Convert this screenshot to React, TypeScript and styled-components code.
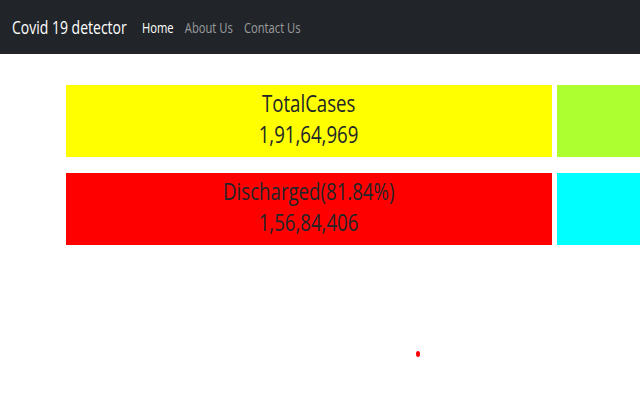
import React from 'react';
import styled, { createGlobalStyle } from 'styled-components';

const GlobalStyle = createGlobalStyle`
  html, body {
    margin: 0;
    padding: 0;
    background: #fff;
    overflow: hidden;
    width: 640px;
    height: 420px;
  }
  body {
    font-family: 'Open Sans', 'Noto Sans', sans-serif;
    color: #212529;
  }
`;

const stats = [
  { title: 'TotalCases', value: '1,91,64,969', color: '#ffff00' },
  { title: '', value: '', color: '#adff2f' },
  { title: 'Discharged(81.84%)', value: '1,56,84,406', color: '#ff0000' },
  { title: '', value: '', color: '#00ffff' },
];

function App() {
  return (
    <Page>
      <GlobalStyle />
      <NavBar>
        <NavContent>
          <Brand>Covid 19 detector</Brand>
          <NavLinks>
            <NavLink active>Home</NavLink>
            <NavLink>About Us</NavLink>
            <NavLink>Contact Us</NavLink>
          </NavLinks>
        </NavContent>
      </NavBar>
      <CardGrid>
        {stats.map((s, i) => (
          <Card key={i} bg={s.color}>
            <CardText>{s.title}</CardText>
            <CardText>{s.value}</CardText>
          </Card>
        ))}
      </CardGrid>
      <Dot />
    </Page>
  );
}

export default App;

const Page = styled.div`
  width: 640px;
  height: 420px;
  overflow: hidden;
`;

const NavBar = styled.nav`
  display: flex;
  align-items: center;
  height: 54px;
  padding: 0 12px;
  background: #212529;
  box-sizing: border-box;
`;

/* the screenshot is squeezed sideways, so the text is narrowed to match */
const NavContent = styled.div`
  display: flex;
  align-items: center;
  transform: scaleX(0.8);
  transform-origin: left center;
  white-space: nowrap;
`;

const Brand = styled.span`
  color: #fff;
  font-size: 17.5px;
  margin-right: 19px;
`;

const NavLinks = styled.div`
  display: flex;
  gap: 14px;
`;

const NavLink = styled.span<{ active?: boolean }>`
  font-size: 14px;
  font-weight: ${({ active }) => (active ? 500 : 400)};
  color: ${({ active }) => (active ? '#fff' : 'rgba(255, 255, 255, 0.55)')};
`;

const CardGrid = styled.div`
  display: grid;
  grid-template-columns: 486px 486px;
  column-gap: 5px;
  row-gap: 16px;
  margin: 31px 0 0 66px;
`;

const Card = styled.div<{ bg: string }>`
  display: flex;
  flex-direction: column;
  align-items: center;
  justify-content: center;
  height: 72px;
  padding-bottom: 5px;
  box-sizing: border-box;
  background: ${({ bg }) => bg};
  color: #212529;
  font-size: 23px;
  font-weight: 500;
  line-height: 31px;
`;

const CardText = styled.div`
  transform: scaleX(0.81);
  white-space: nowrap;
`;

const Dot = styled.div`
  width: 4px;
  height: 6px;
  border-radius: 50%;
  background: #ff0000;
  margin: 106px 0 0 416px;
`;
